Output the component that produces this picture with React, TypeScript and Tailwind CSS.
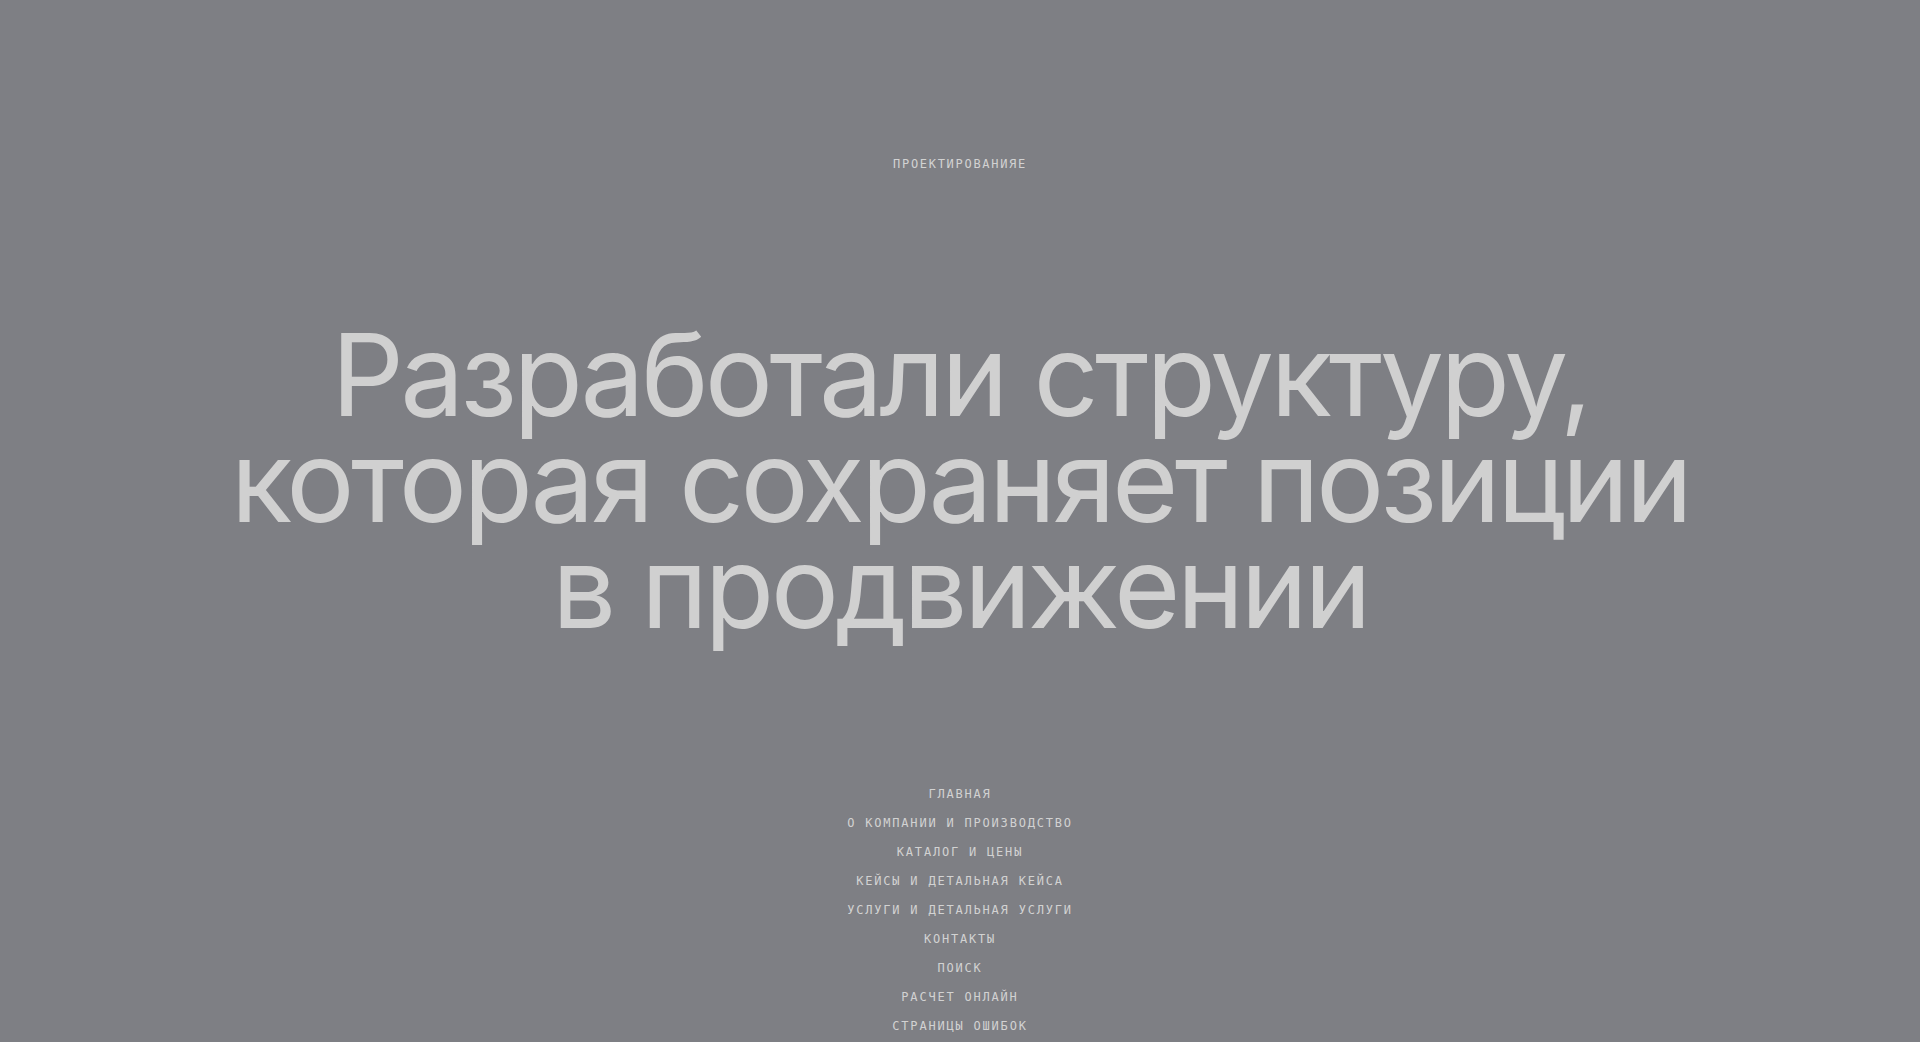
import React from 'react';

const links = [
    'Главная',
    'О компании и производство',
    'Каталог и цены',
    'Кейсы и детальная кейса',
    'Услуги и детальная услуги',
    'Контакты',
    'Поиск',
    'Расчет онлайн',
    'Страницы ошибок',
];

const App: React.FC = () => {
    return (
        <div className="min-h-screen bg-[#7e7f84] flex flex-col items-center overflow-hidden">
            {/* Section label */}
            <p className="mt-[156px] font-['DejaVu_Sans_Mono',monospace] text-[12px] leading-[16px] tracking-[1.7px] uppercase text-[#d2d2d2]">
                Проектированияе
            </p>

            {/* Headline */}
            <h1 className="mt-[150px] text-center font-['Inter',sans-serif] text-[114px] leading-[106px] tracking-[-0.032em] text-[#d0d0d0]">
                <span className="block">Разработали структуру,</span>
                <span className="block">которая сохраняет позиции</span>
                <span className="block">в продвижении</span>
            </h1>

            {/* Page list */}
            <ul className="mt-[140px] flex flex-col items-center font-['DejaVu_Sans_Mono',monospace] text-[12px] leading-[29px] tracking-[1.8px] uppercase text-[#d2d2d2]">
                {links.map(l => (
                    <li key={l}>{l}</li>
                ))}
            </ul>
        </div>
    );
};

export default App;
